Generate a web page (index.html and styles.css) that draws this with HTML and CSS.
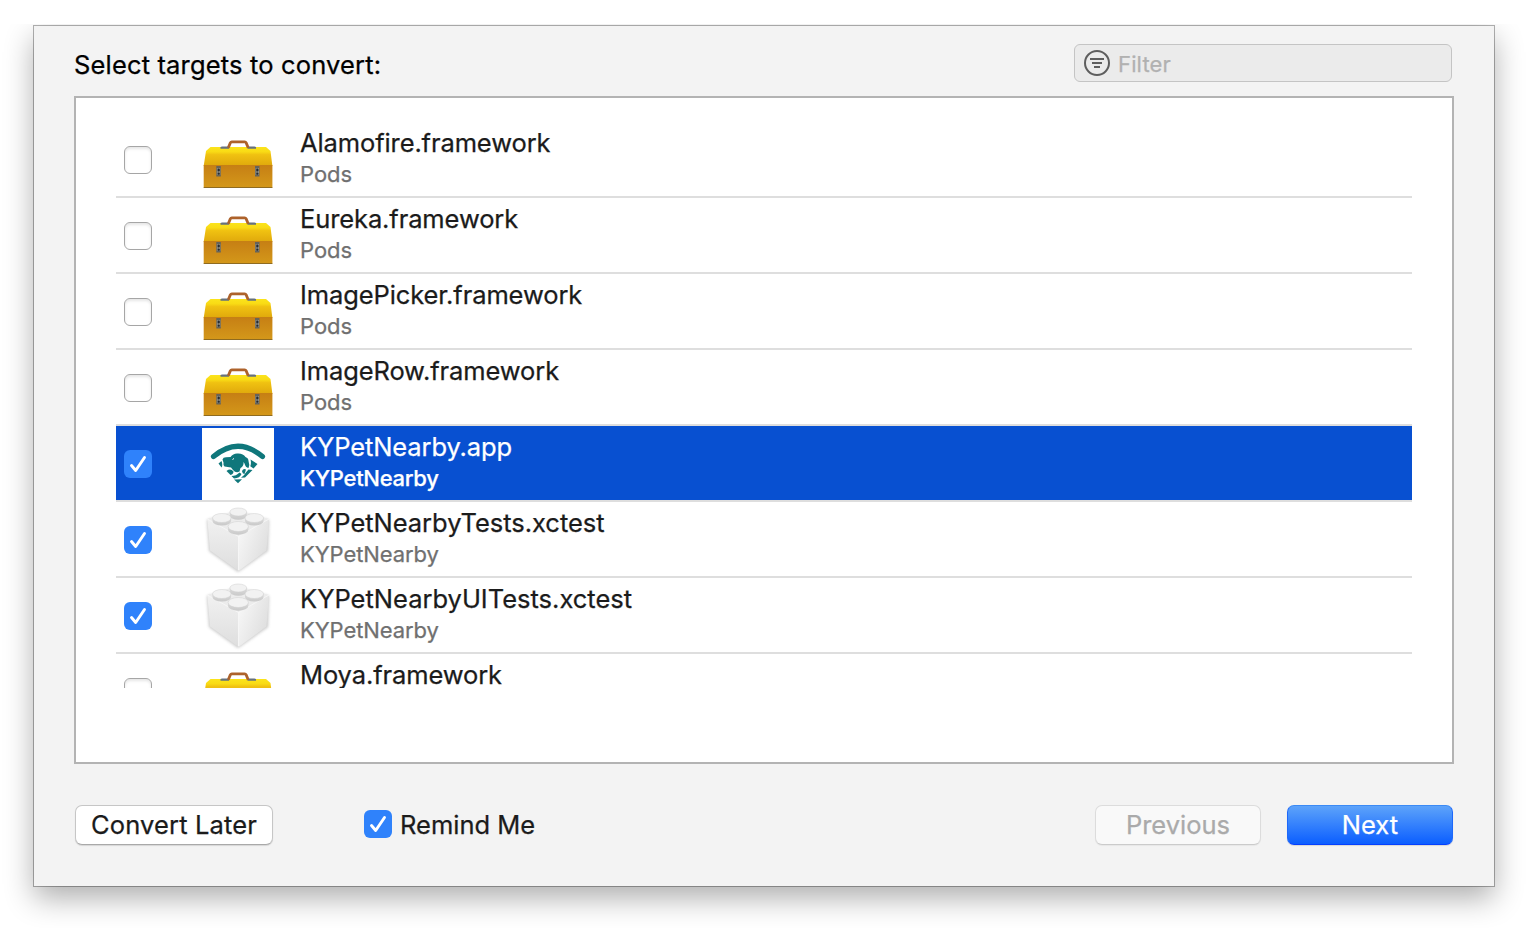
FILE: index.html
```html
<!DOCTYPE html>
<html lang="en">
<head>
<meta charset="utf-8">
<title>Select targets to convert</title>
<link rel="stylesheet" href="styles.css">
</head>
<body>
<svg class="defs" aria-hidden="true">
  <defs>
    <linearGradient id="lid" x1="0" y1="0" x2="0" y2="1"><stop offset="0" stop-color="#fbe41c"/><stop offset=".25" stop-color="#f9db15"/><stop offset=".4" stop-color="#f0c211"/><stop offset="1" stop-color="#dfa80c"/></linearGradient>
    <linearGradient id="box" x1="0" y1="0" x2="0" y2="1"><stop offset="0" stop-color="#c67f14"/><stop offset="1" stop-color="#d4981a"/></linearGradient>
    <linearGradient id="left" x1="0" y1="0" x2="0" y2="1"><stop offset="0" stop-color="#f1f1f1"/><stop offset="1" stop-color="#dedede"/></linearGradient>
    <linearGradient id="right" x1="0" y1="0" x2="1" y2=".6"><stop offset="0" stop-color="#fafafa"/><stop offset="1" stop-color="#dedede"/></linearGradient>
    <linearGradient id="stud" x1="0" y1="0" x2="0" y2="1"><stop offset="0" stop-color="#dcdcdc"/><stop offset="1" stop-color="#c9c9c9"/></linearGradient>
    <filter id="glow" x="-20%" y="-20%" width="140%" height="140%"><feGaussianBlur stdDeviation="1.600"/></filter>
    <symbol id="toolbox" viewBox="0 0 72 72">
      <path d="M4 27 8.500 23H64l4.500 4L70.400 42H1.700z" fill="url(#lid)"/>
      <path d="M1.700 41H70.400V63.600H1.700z" fill="url(#box)"/>
      <path d="M1.700 63.500H70.400" stroke="#8f6b20" stroke-width="1"/>
      <path d="M18.500 24.700V23L20 22.500H27V24.700zM45.500 24.700V22.500H52.500L54 23V24.700z" fill="#66717d"/>
      <path d="M26.300 23.800 28.300 18.900Q28.800 17.900 29.800 17.900H42.700Q43.700 17.900 44.200 18.900L46.200 23.800" fill="none" stroke="#ad622b" stroke-width="2.800"/>
      <g id="latch"><path d="M14.300 42h4.500v10.500h-4.500z" fill="#66645a"/><path d="M15.300 44v7M17.800 44v7" stroke="#989da0" stroke-width=".7"/><path d="M15.700 45h2v2h-2zM15.700 49h2v1.500h-2z" fill="#252a30"/></g>
      <use href="#latch" x="38.700"/>
    </symbol>
    <symbol id="brick" viewBox="0 0 72 72">
      <path d="M5 16 36 8 67 16 66 47 36 68 7 47z" fill="#888" opacity=".45" filter="url(#glow)"/>
      <path d="M5.300 15 36 6 67 15 36.500 33z" fill="#ececec"/>
      <path d="M5.300 15 36.500 32.500V67L8 46.500z" fill="url(#left)"/>
      <path d="M67 15 36.500 32.500V67L64.500 46.500z" fill="url(#right)"/>
      <path d="M5.300 15 36.500 32.500 67 15M36.500 32.500V66" fill="none" stroke="#fafafa" stroke-width=".8"/>
      <g fill="url(#stud)">
        <path d="M27.800 8v3.500a8.500 4.300 0 0 0 17 0V8z"/>
        <path d="M10.500 14v3a9.300 4.500 0 0 0 18.600 0v-3z"/>
        <path d="M43 14v3a9.300 4.500 0 0 0 18.600 0v-3z"/>
        <path d="M26 22.500v3.300a10.200 5 0 0 0 20.400 0v-3.300z"/>
      </g>
      <g fill="#f2f2f2" stroke="#cecece" stroke-width=".5">
        <ellipse cx="36.300" cy="8" rx="8.500" ry="4"/>
        <ellipse cx="19.800" cy="14" rx="9.300" ry="4.500"/>
        <ellipse cx="52.300" cy="14" rx="9.300" ry="4.500"/>
        <ellipse cx="36.200" cy="22.500" rx="10.200" ry="5"/>
      </g>
    </symbol>
    <symbol id="pet" viewBox="0 0 72 72">
      <g fill="#0f777b">
        <path d="M11.500 28.500Q36 8 60.500 28.500" fill="none" stroke="#0f777b" stroke-width="5.200" stroke-linecap="round"/>
        <path d="M20.500 31.500Q21 29.300 24 29.200L28.500 29Q31 25.500 35 25.500Q41 25 43.500 29Q46.500 30 46.500 33Q48 37 46.500 40Q43.500 39.500 42.500 35.500L41.500 34Q42 38 38.500 40L37.500 43.500Q34 45.500 31 42L29 39.500 22.500 38.500Q21 37 21.500 34.500z"/>
        <path d="M19.500 33 16.500 35.500 19.500 39.500Q21 37 19.500 33z"/>
        <path d="M48.500 31.500 55.500 36 51.500 40.500 48.300 38.300Q49.500 35 48.500 31.500z"/>
        <path d="M24.500 43Q28.500 40 31.500 43.500Q31.500 46 28.500 47z"/>
        <path d="M29.500 48Q34 48 37.500 44.500L39.500 46Q38 50 32 50.500z"/>
        <path d="M40 43Q41.500 40 44 41.500L42.500 46Q40.500 46 40 43z"/>
        <path d="M46.500 41.500 50.500 42 43 49.500 39 49.700Q42.500 47.500 43.500 45z"/>
        <path d="M32 51.500 40 51.200 36 55.300z"/>
      </g>
      <path d="M30.500 31.500 32 30.500" stroke="#fff" stroke-width="1"/>
    </symbol>
    <symbol id="check" viewBox="0 0 28 28"><path d="M7.500 15.500 11.700 20.500 20.500 7.500" fill="none" stroke="#fff" stroke-width="2.900" stroke-linecap="round" stroke-linejoin="round"/></symbol>
  </defs>
</svg>
<div class="stage">
<main class="sheet">
  <header class="header">
    <h1 class="heading">Select targets to convert:</h1>
    <div class="filter">
      <svg class="filter-icon" viewBox="0 0 26 26"><circle cx="13" cy="13" r="12" fill="none" stroke="#5e5e5e" stroke-width="2"/><path d="M6 9H20M8 13H18M10 17H16" stroke="#5e5e5e" stroke-width="2"/></svg>
      <span class="placeholder">Filter</span>
    </div>
  </header>
  <section class="table">
    <ul class="rows">
      <li class="row"><span class="checkbox"></span><svg class="icon"><use href="#toolbox"/></svg><div class="label"><span class="name">Alamofire.framework</span><span class="project pods">Pods</span></div></li>
      <li class="row"><span class="checkbox"></span><svg class="icon"><use href="#toolbox"/></svg><div class="label"><span class="name">Eureka.framework</span><span class="project pods">Pods</span></div></li>
      <li class="row"><span class="checkbox"></span><svg class="icon"><use href="#toolbox"/></svg><div class="label"><span class="name">ImagePicker.framework</span><span class="project pods">Pods</span></div></li>
      <li class="row"><span class="checkbox"></span><svg class="icon"><use href="#toolbox"/></svg><div class="label"><span class="name">ImageRow.framework</span><span class="project pods">Pods</span></div></li>
      <li class="row selected"><span class="checkbox checked"><svg class="tick"><use href="#check"/></svg></span><svg class="icon app"><use href="#pet"/></svg><div class="label"><span class="name">KYPetNearby.app</span><span class="project">KYPetNearby</span></div></li>
      <li class="row"><span class="checkbox checked"><svg class="tick"><use href="#check"/></svg></span><svg class="icon"><use href="#brick"/></svg><div class="label"><span class="name tests">KYPetNearbyTests.xctest</span><span class="project">KYPetNearby</span></div></li>
      <li class="row"><span class="checkbox checked"><svg class="tick"><use href="#check"/></svg></span><svg class="icon"><use href="#brick"/></svg><div class="label"><span class="name ui-tests">KYPetNearbyUITests.xctest</span><span class="project">KYPetNearby</span></div></li>
      <li class="row"><span class="checkbox"></span><svg class="icon"><use href="#toolbox"/></svg><div class="label"><span class="name">Moya.framework</span></div></li>
    </ul>
  </section>
  <footer class="footer">
    <button class="button later">Convert Later</button>
    <label class="remind"><span class="checkbox checked"><svg class="tick"><use href="#check"/></svg></span><span class="remind-text">Remind Me</span></label>
    <button class="button previous" disabled>Previous</button>
    <button class="button next">Next</button>
  </footer>
</main>
</div>
</body>
</html>
```
FILE: styles.css
```css
* { box-sizing: border-box; }
body { margin: 0; background: #fff; font-family: Inter, "Liberation Sans", sans-serif; color: #000; -webkit-text-stroke: .25px currentColor; }
.defs { position: absolute; width: 0; height: 0; }
.stage { width: 1528px; height: 928px; padding: 26px 34px 42px; overflow: hidden; clip-path: inset(24px 0 0 0); }
.sheet { height: 860px; padding: 18px 40px 0; background: #f3f3f3; box-shadow: 0 0 0 1px rgba(0,0,0,.3), 0 12px 28px rgba(0,0,0,.32); }
.header { display: flex; justify-content: space-between; height: 52px; padding-right: 2px; }
.heading { margin: 5px 0 0; font-size: 25.500px; font-weight: 400; line-height: 32px; letter-spacing: .16px; white-space: nowrap; }
.filter { display: flex; align-items: center; gap: 8px; width: 378px; height: 38px; padding-left: 9px; border: 1px solid #c4c4c4; border-radius: 6px; background: #ebebeb; }
.filter-icon { width: 26px; height: 26px; }
.placeholder { font-size: 22px; line-height: 30px; letter-spacing: .15px; color: #b1b1b1; padding-top: 2px; }
.table { height: 668px; padding: 24px 40px 0; border: 2px solid #b3b3b3; background: #fff; }
.rows { height: 566px; margin: 0; padding: 0; overflow: hidden; list-style: none; }
.row { display: flex; align-items: center; height: 76px; padding: 2px 8px 0; border-bottom: 2px solid #dedede; }
.icon { flex: none; width: 72px; height: 72px; margin-left: 50px; }
.app { background: #fff; }
.label { display: flex; flex-direction: column; align-self: flex-start; margin-left: 26px; white-space: nowrap; }
.name { margin-top: 3px; font-size: 25.500px; line-height: 32px; letter-spacing: -.11px; color: #1b1b1b; }
.tests { letter-spacing: -.04px; }
.ui-tests { letter-spacing: 0; }
.project { font-size: 22px; line-height: 30px; letter-spacing: -.08px; color: #707070; }
.pods { letter-spacing: 0; }
.selected { background: #0850d1; }
.selected .name, .selected .project { color: #fff; }
.selected .project { font-weight: 500; letter-spacing: -.3px; }
.checkbox { flex: none; width: 28px; height: 28px; border: 1px solid #a6a6a6; border-radius: 6px; background: #fff; box-shadow: inset 0 2px 3px rgba(0,0,0,.1); }
.checked { border: 0; background: #2f82fb; box-shadow: none; }
.tick { display: block; width: 28px; height: 28px; }
.footer { display: flex; align-items: center; height: 40px; margin-top: 41px; padding: 0 1px; }
.button { height: 40px; padding: 0; border: 1px solid #c6c6c6; border-bottom-color: #a9a9a9; border-radius: 7px; background: #fff; font: 25.500px/38px Inter, "Liberation Sans", sans-serif; color: #1b1b1b; box-shadow: 0 1px 1px rgba(0,0,0,.12); white-space: nowrap; }
.later { width: 198px; letter-spacing: .15px; }
.remind { display: flex; align-items: center; gap: 8px; margin-left: 91px; font-size: 25.500px; line-height: 38px; color: #1b1b1b; }
.remind .checkbox { margin-bottom: 2px; }
.previous { width: 166px; margin-left: auto; border-color: #dcdcdc; border-bottom-color: #cbcbcb; background: #f9f9f9; color: #aaa; box-shadow: 0 1px 1px rgba(0,0,0,.05); }
.next { width: 166px; margin-left: 26px; border-color: #3b8af5 #1d68fa #043fff; background: linear-gradient(#5da3fa, #0b5eff); color: #fff; }
```
